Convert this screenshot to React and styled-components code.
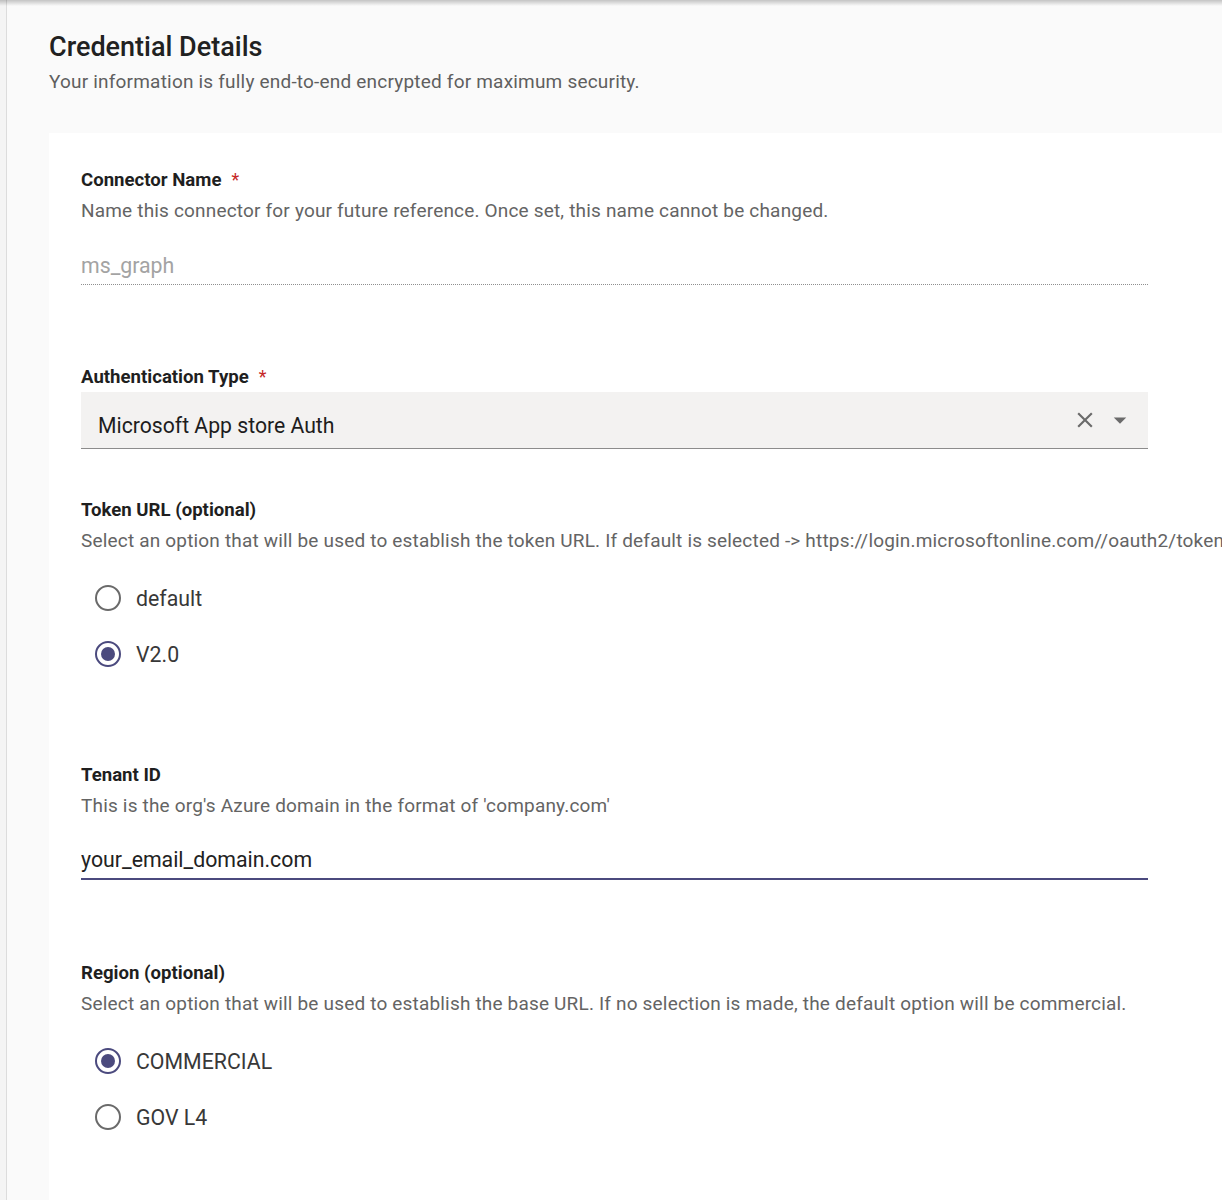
import styled, { createGlobalStyle } from "styled-components";

const GlobalStyle = createGlobalStyle`
  body {
    margin: 0;
    background: #fafafa;
    font-family: Roboto, "Liberation Sans", sans-serif;
    overflow: hidden;
  }
`;

const Page = styled.div`
  position: relative;
  display: flex;
  width: 100%;
  min-height: 1200px;
  overflow: hidden;
  &::before {
    content: "";
    position: absolute;
    left: 0;
    right: 0;
    top: 0;
    height: 6px;
    pointer-events: none;
    background: linear-gradient(rgba(0, 0, 0, 0.22), rgba(0, 0, 0, 0));
  }
`;

const Rail = styled.div`
  flex: 0 0 6px;
  background: #f4f4f4;
  border-right: 1px solid #dcdcdc;
`;

const Main = styled.main`
  flex: 1;
  padding: 30px 0 0 42px;
  min-width: 0;
`;

const Title = styled.h1`
  margin: 0;
  font-size: 27px;
  line-height: 34px;
  font-weight: 500;
  color: #212121;
`;

const Subtitle = styled.p`
  margin: 6px 0 0;
  font-size: 19px;
  line-height: 24px;
  color: #5f5f5f;
  letter-spacing: 0.2px;
`;

const Card = styled.section`
  margin-top: 39px;
  width: 1300px;
  background: #fff;
  padding: 35px 32px 60px;
  box-sizing: border-box;
`;

const Field = styled.div`
  margin-top: ${(p) => p.$gap || 0}px;
  width: 1067px;
`;

const Label = styled.div`
  display: flex;
  align-items: center;
  gap: 10px;
  font-size: 18.6px;
  line-height: 24px;
  font-weight: 700;
  color: #1f1f1f;
  margin-bottom: ${(p) => p.$after || 0}px;
`;

const Required = styled.span`
  color: #c62828;
  font-weight: 400;
  font-size: 18px;
`;

const Help = styled.div`
  font-size: 19px;
  line-height: 24px;
  color: #646464;
  letter-spacing: 0.18px;
  white-space: nowrap;
`;

const TextInput = styled.input`
  display: block;
  width: 100%;
  height: 39px;
  margin-top: 23px;
  padding: 0;
  box-sizing: border-box;
  border: none;
  border-bottom: ${(p) => (p.$focused ? "2px solid #4b4a7e" : "1px dotted #8f8f8f")};
  background: transparent;
  font-family: inherit;
  font-size: 21.3px;
  color: ${(p) => (p.disabled ? "#a3a3a3" : "#222")};
  outline: none;
  -webkit-text-fill-color: ${(p) => (p.disabled ? "#a3a3a3" : "#222")};
`;

const Select = styled.div`
  display: flex;
  align-items: center;
  gap: 7px;
  height: 57px;
  box-sizing: border-box;
  padding: 0 13px 0 17px;
  background: #f3f2f1;
  border-bottom: 1px solid #8c8c8c;
  font-size: 21.2px;
  color: #1d1d1d;
`;

const SelectValue = styled.span`
  flex: 1;
  padding-top: 10px;
`;

const IconButton = styled.span`
  display: flex;
  align-items: center;
  justify-content: center;
  width: ${(p) => p.$w}px;
  height: 30px;
  color: #6b6b6b;
`;

const RadioGroup = styled.div`
  display: flex;
  flex-direction: column;
  margin-top: 17px;
`;

const RadioRow = styled.label`
  display: flex;
  align-items: center;
  height: 56px;
  padding-left: 14px;
  gap: 15px;
  font-size: 21.3px;
  color: #383838;
  cursor: pointer;
`;

const RadioCircle = styled.span`
  position: relative;
  width: 26px;
  height: 26px;
  box-sizing: border-box;
  border-radius: 50%;
  border: 2.4px solid ${(p) => (p.$checked ? "#4b4a7e" : "#6a6a6a")};
  &::after {
    content: "";
    position: absolute;
    inset: 4px;
    border-radius: 50%;
    background: #4b4a7e;
    display: ${(p) => (p.$checked ? "block" : "none")};
  }
`;

function Radio({ label, checked }) {
  return (
    <RadioRow>
      <RadioCircle $checked={checked} />
      {label}
    </RadioRow>
  );
}

export default function App() {
  return (
    <>
      <GlobalStyle />
      <Page>
        <Rail />
        <Main>
          <Title>Credential Details</Title>
          <Subtitle>Your information is fully end-to-end encrypted for maximum security.</Subtitle>
          <Card>
            <Field>
              <Label $after={7}>
                Connector Name <Required>*</Required>
              </Label>
              <Help>Name this connector for your future reference. Once set, this name cannot be changed.</Help>
              <TextInput disabled value="ms_graph" readOnly />
            </Field>

            <Field $gap={80}>
              <Label $after={3}>
                Authentication Type <Required>*</Required>
              </Label>
              <Select>
                <SelectValue>Microsoft App store Auth</SelectValue>
                <IconButton $w={26}>
                  <svg width="26" height="26" viewBox="0 0 24 24" fill="currentColor">
                    <path d="M19 6.41 17.59 5 12 10.59 6.41 5 5 6.41 10.59 12 5 17.59 6.41 19 12 13.41 17.59 19 19 17.59 13.41 12z" />
                  </svg>
                </IconButton>
                <IconButton $w={30}>
                  <svg width="30" height="30" viewBox="0 0 24 24" fill="currentColor">
                    <path d="M7 10l5 5 5-5z" />
                  </svg>
                </IconButton>
              </Select>
            </Field>

            <Field $gap={49}>
              <Label $after={7}>Token URL (optional)</Label>
              <Help>
                Select an option that will be used to establish the token URL. If default is selected -&gt; https://login.microsoftonline.com//oauth2/token, else -&gt; https://login.microsoftonline.com//oauth2/v2.0/token
              </Help>
              <RadioGroup>
                <Radio label="default" />
                <Radio label="V2.0" checked />
              </RadioGroup>
            </Field>

            <Field $gap={81}>
              <Label $after={7}>Tenant ID</Label>
              <Help>This is the org's Azure domain in the format of 'company.com'</Help>
              <TextInput $focused defaultValue="your_email_domain.com" />
            </Field>

            <Field $gap={81}>
              <Label $after={7}>Region (optional)</Label>
              <Help>
                Select an option that will be used to establish the base URL. If no selection is made, the default option will be commercial.
              </Help>
              <RadioGroup>
                <Radio label="COMMERCIAL" checked />
                <Radio label="GOV L4" />
              </RadioGroup>
            </Field>
          </Card>
        </Main>
      </Page>
    </>
  );
}
